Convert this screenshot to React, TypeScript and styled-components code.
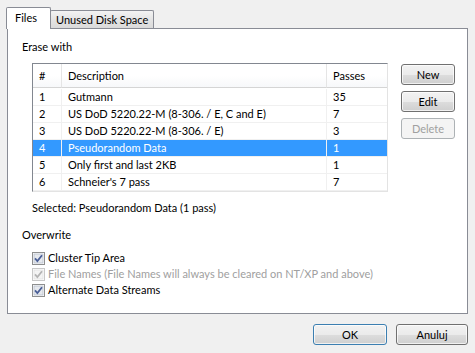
import React from 'react';
import styled, { createGlobalStyle } from 'styled-components';

interface Method {
  id: number;
  name: string;
  passes: number;
}

const methods: Method[] = [
  { id: 1, name: 'Gutmann', passes: 35 },
  { id: 2, name: 'US DoD 5220.22-M (8-306. / E, C and E)', passes: 7 },
  { id: 3, name: 'US DoD 5220.22-M (8-306. / E)', passes: 3 },
  { id: 4, name: 'Pseudorandom Data', passes: 1 },
  { id: 5, name: 'Only first and last 2KB', passes: 1 },
  { id: 6, name: "Schneier's 7 pass", passes: 7 },
];

const GlobalStyle = createGlobalStyle`
  html, body {
    margin: 0;
    padding: 0;
    background: #f0f0f0;
  }
  body {
    font-family: 'Segoe UI', Lato, 'Noto Sans', sans-serif;
    font-size: 11px;
    color: #000;
  }
`;

const Dialog = styled.div`
  width: 475px;
  height: 353px;
  box-sizing: border-box;
  padding: 7px 7px 0 7px;
  display: flex;
  flex-direction: column;
`;

const TabStrip = styled.div`
  display: flex;
  align-items: flex-end;
  height: 21px;
  margin-left: -1px;
  position: relative;
  z-index: 1;
`;

const Tab = styled.div<{ $active?: boolean }>`
  box-sizing: border-box;
  border: 1px solid #898c95;
  border-bottom: none;
  border-radius: 2px 2px 0 0;
  display: flex;
  align-items: center;
  ${p =>
    p.$active
      ? `
    width: 45px;
    height: 22px;
    padding: 0 0 2px 8px;
    background: #fff;
    margin-bottom: -1px;
  `
      : `
    height: 18px;
    padding: 0 5px 0 5px;
    margin-left: -1px;
    background: linear-gradient(#f3f3f3, #e4e4e4 50%, #dadada);
  `}
`;

const Panel = styled.div`
  box-sizing: border-box;
  width: 461px;
  height: 286px;
  border: 1px solid #898c95;
  background: #fff;
  padding: 9px 0 0 14px;
  display: flex;
  flex-direction: column;
`;

const SectionLabel = styled.div`
  height: 17px;
  line-height: 17px;
`;

const ListRow = styled.div`
  display: flex;
  gap: 13px;
  margin: 8px 0 0 10px;
`;

const ListBox = styled.div`
  box-sizing: border-box;
  width: 356px;
  border: 1px solid #828790;
  border-right-color: #e3e3e3;
  border-bottom-color: #e3e3e3;
`;

const Grid = styled.div`
  display: grid;
  grid-template-columns: 29px 265px 60px;
`;

const HeadCell = styled.div<{ $last?: boolean }>`
  height: 23px;
  line-height: 23px;
  padding-left: 6px;
  background: linear-gradient(#ffffff, #ffffff 50%, #f7f8fa);
  border-bottom: 1px solid #d5d5d5;
  border-right: ${p => (p.$last ? 'none' : '1px solid #e5e5e5')};
  margin-bottom: 1px;
`;

const Cell = styled.div<{ $selected?: boolean; $last?: boolean }>`
  height: 16px;
  line-height: 16px;
  padding-left: 6px;
  border-bottom: 1px solid #f0f0f0;
  border-right: ${p => (p.$last ? 'none' : '1px solid #f0f0f0')};
  background: ${p => (p.$selected ? '#3399ff' : 'transparent')};
  color: ${p => (p.$selected ? '#fff' : '#000')};
  white-space: nowrap;
  overflow: hidden;
`;

const SideButtons = styled.div`
  display: flex;
  flex-direction: column;
  gap: 6px;
  padding-top: 1px;
`;

const Button = styled.button<{ $default?: boolean; $width?: number }>`
  box-sizing: border-box;
  width: ${p => p.$width ?? 54}px;
  height: 21px;
  padding: 0;
  font: inherit;
  color: #000;
  border: 1px solid ${p => (p.$default ? '#3c7fb1' : '#707070')};
  border-radius: 3px;
  background: linear-gradient(#f2f2f2, #ebebeb 50%, #dddddd 51%, #cfcfcf);
  box-shadow: inset 0 0 0 1px rgba(255, 255, 255, 0.7);

  &:disabled {
    color: #a0a0a0;
    border-color: #adb2b5;
    background: #f4f4f4;
    box-shadow: none;
  }
`;

const SelectedInfo = styled.div`
  margin: 7px 0 0 10px;
  height: 17px;
  line-height: 17px;
`;

const OverwriteLabel = styled(SectionLabel)`
  margin-top: 10px;
`;

const CheckList = styled.div`
  display: flex;
  flex-direction: column;
  margin: 7px 0 0 10px;
`;

const CheckRow = styled.label<{ $disabled?: boolean }>`
  display: flex;
  align-items: center;
  gap: 3px;
  height: 16px;
  line-height: 16px;
  color: ${p => (p.$disabled ? '#a0a0a0' : '#000')};
`;

const Footer = styled.div`
  display: flex;
  justify-content: flex-end;
  gap: 9px;
  margin-top: 10px;
`;

const CheckBox: React.FC<{ disabled?: boolean }> = ({ disabled }) => (
  <svg width="13" height="13" viewBox="0 0 13 13">
    <rect x="0.5" y="0.5" width="12" height="12" fill="#fff" stroke={disabled ? '#c8c8c8' : '#8e8f8f'} />
    <rect
      x="2"
      y="2"
      width="9"
      height="9"
      fill={disabled ? '#f4f4f4' : '#e6e9ee'}
      stroke={disabled ? '#e0e0e0' : '#b7bfcb'}
      strokeWidth="0.8"
    />
    <path
      d="M3 6.3 L5.4 9 L10 3.3"
      fill="none"
      stroke={disabled ? '#b4b4b4' : '#4a5f97'}
      strokeWidth="1.8"
    />
  </svg>
);

export default function App() {
  const selected = 4;
  return (
    <>
      <GlobalStyle />
      <Dialog>
        <TabStrip>
          <Tab $active>Files</Tab>
          <Tab>Unused Disk Space</Tab>
        </TabStrip>
        <Panel>
          <SectionLabel>Erase with</SectionLabel>
          <ListRow>
            <ListBox>
              <Grid>
                <HeadCell>#</HeadCell>
                <HeadCell>Description</HeadCell>
                <HeadCell $last>Passes</HeadCell>
                {methods.map(m => (
                  <React.Fragment key={m.id}>
                    <Cell $selected={m.id === selected}>{m.id}</Cell>
                    <Cell $selected={m.id === selected}>{m.name}</Cell>
                    <Cell $selected={m.id === selected} $last>
                      {m.passes}
                    </Cell>
                  </React.Fragment>
                ))}
              </Grid>
            </ListBox>
            <SideButtons>
              <Button>New</Button>
              <Button>Edit</Button>
              <Button disabled>Delete</Button>
            </SideButtons>
          </ListRow>
          <SelectedInfo>Selected: Pseudorandom Data (1 pass)</SelectedInfo>
          <OverwriteLabel>Overwrite</OverwriteLabel>
          <CheckList>
            <CheckRow>
              <CheckBox />
              Cluster Tip Area
            </CheckRow>
            <CheckRow $disabled>
              <CheckBox disabled />
              File Names (File Names will always be cleared on NT/XP and above)
            </CheckRow>
            <CheckRow>
              <CheckBox />
              Alternate Data Streams
            </CheckRow>
          </CheckList>
        </Panel>
        <Footer>
          <Button $default $width={74}>
            OK
          </Button>
          <Button $width={72}>Anuluj</Button>
        </Footer>
      </Dialog>
    </>
  );
}
